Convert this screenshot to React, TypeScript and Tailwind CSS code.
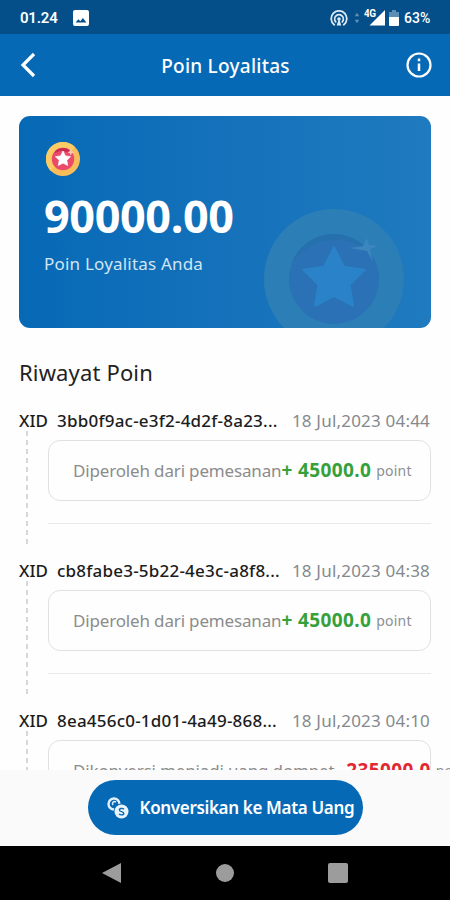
import React from "react";

type Entry = {
	id: string;
	date: string;
	label: string;
	amount: string;
	earned: boolean;
};

const entries: Entry[] = [
	{
		id: "3bb0f9ac-e3f2-4d2f-8a23...",
		date: "18 Jul,2023 04:44",
		label: "Diperoleh dari pemesanan",
		amount: "+ 45000.0",
		earned: true,
	},
	{
		id: "cb8fabe3-5b22-4e3c-a8f8...",
		date: "18 Jul,2023 04:38",
		label: "Diperoleh dari pemesanan",
		amount: "+ 45000.0",
		earned: true,
	},
	{
		id: "8ea456c0-1d01-4a49-868...",
		date: "18 Jul,2023 04:10",
		label: "Dikonversi menjadi uang dompet",
		amount: "- 235000.0",
		earned: false,
	},
];

const STAR =
	"M50 20L59.500 39 80 42 65 56.500 68.500 77 50 67.500 31.500 77 35 56.500 20 42 40.500 39Z";

const StatusBar = () => (
	<div className="flex h-[34px] shrink-0 items-center justify-between bg-[#044f89] pr-[19px] pl-5 text-white">
		<div className="flex items-center gap-[14px] pt-0.5">
			<span className="w-[39px] font-['Roboto'] text-[15px] leading-none font-semibold tracking-[-0.2px] whitespace-nowrap">
				01.24
			</span>
			<svg viewBox="0 0 16 16" className="h-4 w-4">
				<path
					fill="#fff"
					fillRule="evenodd"
					d="M2 0h12a2 2 0 0 1 2 2v12a2 2 0 0 1-2 2H2a2 2 0 0 1-2-2V2C0 .9.900 0 2 0Zm.600 12.500h10.800L9.900 8 7.300 11.200 5.400 9.200Z"
				/>
			</svg>
		</div>
		<div className="flex items-center pt-0.5">
			<svg viewBox="0 0 18 17" className="h-[17px] w-[18px]">
				<g fill="none" stroke="#dce9f2" strokeWidth="1.800" strokeLinecap="round">
					<path d="M4.200 14.800a7.800 7.800 0 1 1 9.600 0" />
					<path d="M5.700 11.800a4.300 4.300 0 1 1 6.600 0" />
				</g>
				<path d="M9 8.500L11.300 15.500H6.700Z" fill="#dce9f2" />
				<circle cx="9" cy="9" r="1.800" fill="#dce9f2" />
			</svg>
			<svg viewBox="0 0 6 14" className="ml-[6px] h-3 w-[6px] fill-[#5f91b8]">
				<path d="M3 1l2.600 4H.4zM3 13L.4 9h5.200z" />
			</svg>
			<svg viewBox="0 0 22 18" className="mt-[-2px] ml-1 h-[18px] w-[22px]">
				<path d="M21 2v15.500H5.500Z" fill="#fff" />
				<text
					x="0"
					y="9"
					fill="#fff"
					stroke="#044f89"
					strokeWidth="1.500"
					paintOrder="stroke"
					fontFamily="Roboto"
					fontSize="10"
					fontWeight="700"
					textLength="12"
				>
					4G
				</text>
			</svg>
			<svg viewBox="0 0 10 16" className="ml-[3px] h-4 w-[10px]">
				<path d="M3 0h4v2h3v5H0V2h3z" fill="#5d8fb6" />
				<path d="M0 7h10v8a1 1 0 0 1-1 1H1a1 1 0 0 1-1-1z" fill="#fff" />
			</svg>
			<span className="ml-[5px] w-[27px] font-['Roboto'] text-[14px] leading-none font-medium whitespace-nowrap">
				63%
			</span>
		</div>
	</div>
);

const Header = () => (
	<div className="flex h-[62px] shrink-0 items-center justify-between bg-[#0669b6] pr-[17px] pl-5 text-white">
		<svg viewBox="0 0 16 26" className="h-[26px] w-4">
			<path d="M14 2L3 13l11 11" fill="none" stroke="#fff" strokeWidth="3.200" />
		</svg>
		<h1 className="mt-0.5 ml-[10px] text-[19px] font-medium tracking-[0.25px]">
			Poin Loyalitas
		</h1>
		<svg viewBox="0 0 28 28" className="h-7 w-7">
			<circle cx="14" cy="14" r="11.500" fill="none" stroke="#fff" strokeWidth="2.200" />
			<path d="M14 12.500v7.500M14 7.500v2.700" stroke="#fff" strokeWidth="2.500" />
		</svg>
	</div>
);

const PointCard = () => (
	<div className="relative mx-[19px] mt-5 h-[212px] shrink-0 overflow-hidden rounded-[11px] bg-linear-to-r from-[#0669b6] to-[#1f7abf] px-[25px] text-white">
		<svg
			viewBox="0 0 140 140"
			className="absolute top-[93px] left-[245px] h-[140px] w-[140px]"
		>
			<circle cx="70" cy="70" r="70" fill="#2c7eb6" />
			<circle cx="70" cy="70" r="45" fill="#2a72b5" />
			<path d="M27 56a45 45 0 0 1 80-11a52 52 0 0 0-80 11Z" fill="#2770ae" />
			<path
				d={STAR}
				transform="translate(19.500 18.500) scale(1.010)"
				fill="#2a82c8"
				stroke="#2a82c8"
				strokeWidth="2.500"
				strokeLinejoin="round"
			/>
			<path d="M86 39l13-2 4-8 2 7 9 1-8 3 3 13-6-11z" fill="#3b86bf" />
		</svg>
		<svg viewBox="0 0 100 100" className="mt-[26px] ml-[2px] h-[34px] w-[34px]">
			<circle cx="50" cy="50" r="50" fill="#f8bd58" />
			<path d="M14 15a50 50 0 0 0 0 70L85 15a50 50 0 0 0-71 0Z" fill="#fbcc66" />
			<circle cx="50" cy="50" r="33" fill="#ea4b6a" />
			<path d="M28 26a33 33 0 0 1 42-2l-6 7a34 34 0 0 0-38 2Z" fill="#c92c50" />
			<path
				d={STAR}
				transform="translate(13 12) scale(.740)"
				fill="#fff"
				stroke="#fff"
				strokeWidth="3"
				strokeLinejoin="round"
			/>
			<path d="M73 20l3 7 7 3-7 3-3 7-3-7-7-3 7-3z" fill="#f9c8b8" />
		</svg>
		<p className="mt-4 text-[45px] leading-[48px] font-bold tracking-[-0.4px]">
			90000.00
		</p>
		<p className="mt-3 text-[17px] leading-6 tracking-[0.2px] text-[#d3e5f3]">
			Poin Loyalitas Anda
		</p>
	</div>
);

const HistoryItem = ({ entry }: { entry: Entry }) => (
	<li className="h-[150px] shrink-0">
		<div className="flex h-6 items-center pt-px pr-5 pl-[19px] text-[17px] whitespace-nowrap">
			<span className="w-[38px] font-medium text-[#1c1c1c]">XID</span>
			<span className="w-[235px] font-medium tracking-[0.22px] text-[#1c1c1c]">
				{entry.id}
			</span>
			<span className="tracking-[0.2px] text-[#85898d]">{entry.date}</span>
		</div>
		<div className="flex">
			<div className="mt-[-1px] ml-[26px] h-[113px] w-[2px] bg-[repeating-linear-gradient(to_bottom,#d2d9da_0_5px,transparent_5px_9px)]" />
			<div className="ml-5 w-[383px] pt-2">
				<div className="flex h-[61px] items-center rounded-xl border border-[#dfe2e3] pl-6 whitespace-nowrap">
					<span className="text-[17px] tracking-[-0.16px] text-[#8c8c8c]">
						{entry.label}
					</span>
					<span
						className={`text-[19px] font-bold tracking-[0.38px] ${
							entry.earned ? "text-[#36a13b]" : "text-[#e22832]"
						}`}
					>
						{entry.amount}
					</span>
					<span className="ml-[5px] text-[14px] tracking-[0.2px] text-[#8c8f92]">
						point
					</span>
				</div>
				<div className="mt-[22px] h-px bg-[#e8eaea]" />
			</div>
		</div>
	</li>
);

const ConvertButton = () => (
	<div className="flex h-[76px] shrink-0 justify-center bg-[#fafafa] pt-[10px]">
		<button className="flex h-[55px] w-[275px] items-center rounded-full bg-[#0669b6] pl-[19px] text-white">
			<svg viewBox="0 0 22 22" className="h-[22px] w-[22px] shrink-0">
				<circle cx="7" cy="7" r="5.500" fill="none" stroke="#e4f1fa" strokeWidth="2.400" />
				<path d="M9 5C6.500 3.500 4.500 6 6 8" fill="none" stroke="#e4f1fa" strokeWidth="1.500" />
				<circle cx="14.500" cy="14.500" r="8" fill="#0669b6" />
				<circle cx="14.500" cy="14.500" r="7" fill="#e9f4fc" />
				<path
					d="M17 12.300c-1.500-1.500-5-1-4.500 1 .4 1.800 4 1 4.300 3 .2 1.900-3.300 2-4.800.6"
					fill="none"
					stroke="#0669b6"
					strokeWidth="1.400"
				/>
			</svg>
			<span className="ml-[11px] text-[17px] font-semibold tracking-[-0.34px] whitespace-nowrap">
				Konversikan ke Mata Uang
			</span>
		</button>
	</div>
);

const NavigationBar = () => (
	<div className="flex h-[54px] shrink-0 items-center justify-between bg-black px-[102px] text-[#9c9c9c]">
		<svg viewBox="0 0 20 22" className="h-[22px] w-5 fill-current">
			<path d="M19 1v20L0 11z" />
		</svg>
		<div className="h-[18px] w-[18px] rounded-full bg-current" />
		<div className="h-5 w-5 rounded-[2px] bg-current" />
	</div>
);

const App = () => {
	return (
		<div className="flex h-[900px] w-[450px] flex-col overflow-hidden bg-[#fefefe] font-['Noto_Sans',sans-serif]">
			<StatusBar />
			<Header />
			<main className="flex min-h-0 grow flex-col overflow-hidden">
				<PointCard />
				<h2 className="mt-[28px] ml-[19px] h-8 shrink-0 text-[22px] leading-8 tracking-[0.15px] text-[#222]">
					Riwayat Poin
				</h2>
				<ul className="mt-5 flex flex-col">
					{entries.map((entry) => (
						<HistoryItem key={entry.id} entry={entry} />
					))}
				</ul>
			</main>
			<ConvertButton />
			<NavigationBar />
		</div>
	);
};

export default App;
